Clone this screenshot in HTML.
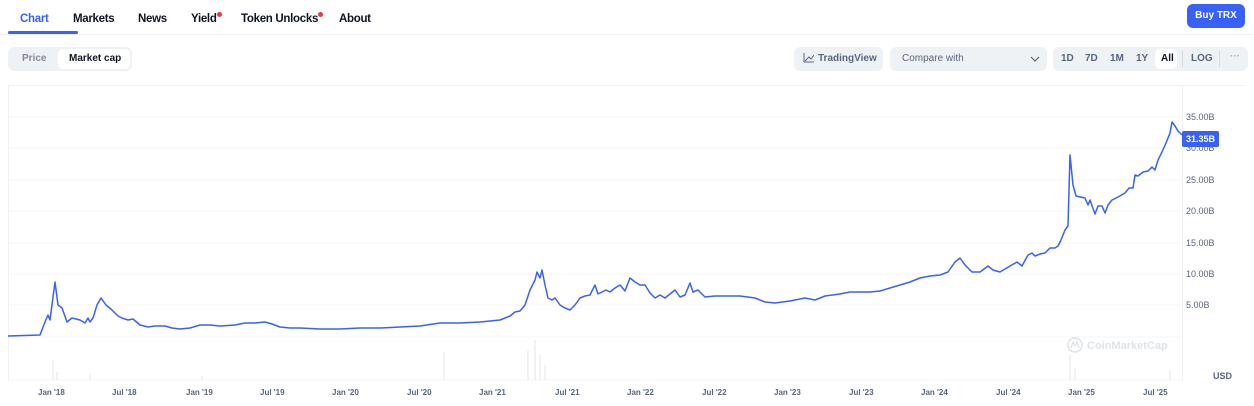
<!DOCTYPE html>
<html><head><meta charset="utf-8"><style>
*{margin:0;padding:0;box-sizing:border-box}
body{width:1254px;height:406px;background:#fff;font-family:"Liberation Sans",sans-serif;position:relative;overflow:hidden;color:#0d1421}
.a{position:absolute;white-space:nowrap}
.tab{font-size:11.5px;font-weight:600;top:13px;letter-spacing:-0.3px}
.dot{display:inline-block;width:5px;height:5px;border-radius:50%;background:#ea3943;vertical-align:top;margin-top:-1px}
.pill{position:absolute;background:#eff2f5;border-radius:6px;top:47px;height:24px}
.s{font-size:10px;font-weight:600;color:#58667e}
.yl{font-size:9px;color:#58667e;left:1186px}
.xl{font-size:8px;color:#58667e;top:388px;font-weight:600}
</style></head><body>
<div class="a tab" style="left:20px;color:#3861fb">Chart</div>
<div style="position:absolute;left:8px;top:31px;width:70px;height:3px;background:#3861fb;border-radius:2px"></div>
<div class="a tab" style="left:73px">Markets</div>
<div class="a tab" style="left:138px">News</div>
<div class="a tab" style="left:191px">Yield<span class="dot"></span></div>
<div class="a tab" style="left:241px">Token Unlocks<span class="dot"></span></div>
<div class="a tab" style="left:339px">About</div>
<div style="position:absolute;left:0;top:34px;width:1254px;height:1px;background:#eff2f5"></div>
<div style="position:absolute;left:1187px;top:4px;width:58px;height:24px;background:#3861fb;border-radius:6px;color:#fff;font-size:10px;font-weight:700;text-align:center;line-height:24px">Buy TRX</div>

<div class="pill" style="left:8px;width:124px"></div>
<div class="a s" style="left:22px;top:53px;color:#808a9d">Price</div>
<div style="position:absolute;left:58px;top:49px;width:72px;height:20px;background:#fff;border-radius:5px"></div>
<div class="a s" style="left:69px;top:53px;color:#0d1421">Market cap</div>

<div class="pill" style="left:794px;width:89px"></div>
<svg class="a" style="left:803px;top:53px" width="11" height="10" viewBox="0 0 11 10"><path d="M1 0V9H11M2 8L6 4L8 6L11 2" fill="none" stroke="#58667e" stroke-width="1"/></svg>
<div class="a s" style="left:818px;top:53px">TradingView</div>
<div class="pill" style="left:890px;width:157px"></div>
<div class="a s" style="left:902px;top:53px;font-weight:500">Compare with</div>
<svg class="a" style="left:1030px;top:56px" width="10" height="6"><path d="M1 1L5 5L9 1" fill="none" stroke="#58667e" stroke-width="1.2"/></svg>
<div class="pill" style="left:1053px;width:195px"></div>
<div style="position:absolute;left:1155px;top:49px;width:22px;height:20px;background:#fff;border-radius:5px"></div>
<div class="a s" style="left:1061px;top:53px">1D</div>
<div class="a s" style="left:1085px;top:53px">7D</div>
<div class="a s" style="left:1110px;top:53px">1M</div>
<div class="a s" style="left:1136px;top:53px">1Y</div>
<div class="a s" style="left:1161px;top:53px;color:#0d1421">All</div>
<div style="position:absolute;left:1182px;top:51px;width:1px;height:16px;background:#d5dae1"></div>
<div class="a s" style="left:1191px;top:53px">LOG</div>
<div style="position:absolute;left:1219px;top:51px;width:1px;height:16px;background:#d5dae1"></div>
<div class="a s" style="left:1230px;top:51px;color:#a6b0c3">···</div>

<div style="position:absolute;left:8px;top:85px;width:1238px;height:1px;background:#eff2f5"></div>
<div style="position:absolute;left:8px;top:85px;width:1px;height:296px;background:#eff2f5"></div>
<div style="position:absolute;left:1182px;top:85px;width:1px;height:296px;background:#eff2f5"></div>
<svg class="a" style="left:0;top:0" width="1254" height="406">
<g stroke="#f3f4f6" stroke-width="1">
<line x1="9" y1="117" x2="1182" y2="117"/><line x1="9" y1="148" x2="1182" y2="148"/><line x1="9" y1="180" x2="1182" y2="180"/><line x1="9" y1="211" x2="1182" y2="211"/><line x1="9" y1="243" x2="1182" y2="243"/><line x1="9" y1="274" x2="1182" y2="274"/><line x1="9" y1="305" x2="1182" y2="305"/><line x1="9" y1="337" x2="1182" y2="337"/><line x1="9" y1="380" x2="1182" y2="380"/>
</g>
<g stroke="#e3e6ea" stroke-width="1">
<line x1="53" y1="380" x2="53" y2="360"/><line x1="57" y1="380" x2="57" y2="372"/><line x1="90" y1="380" x2="90" y2="374"/><line x1="202" y1="380" x2="202" y2="376"/><line x1="444" y1="380" x2="444" y2="352"/><line x1="528" y1="380" x2="528" y2="350"/><line x1="535" y1="380" x2="535" y2="340"/><line x1="540" y1="380" x2="540" y2="355"/><line x1="545" y1="380" x2="545" y2="365"/><line x1="1070" y1="380" x2="1070" y2="355"/><line x1="1075" y1="380" x2="1075" y2="368"/><line x1="1170" y1="380" x2="1170" y2="370"/>
</g>
<polyline fill="none" stroke="#3861fb" stroke-width="1.5" stroke-linejoin="round" points="8,336 40,335 45,322 48,315 50,320 55,282 58,305 62,308 67,322 72,318 80,320 85,323 88,318 90,322 93,318 97,305 101,298 106,305 112,310 118,316 122,318 128,320 133,319 140,325 148,327 155,326 165,326 172,328 180,329 190,328 200,325 210,325 220,326 235,325 245,323 255,323 265,322 272,324 280,327 290,328 300,328 320,329 340,329 360,328 380,328 400,327 420,326 440,323 460,323 480,322 500,320 510,316 515,312 520,311 525,305 530,290 535,280 537,272 540,278 542,270 545,285 548,298 552,300 555,298 560,305 565,308 570,310 575,305 580,298 585,296 590,295 595,285 598,294 602,292 606,290 610,292 615,288 620,285 625,291 630,278 635,282 640,285 645,285 650,293 655,298 660,295 665,298 670,294 675,290 680,297 685,295 690,283 693,292 698,290 705,297 715,296 725,296 740,296 755,298 765,302 775,303 790,301 805,298 815,300 825,296 840,294 850,292 860,292 870,292 880,291 890,288 900,285 910,282 920,278 930,276 940,275 948,272 955,262 960,258 965,265 972,272 980,272 988,266 993,270 1000,272 1010,266 1017,262 1022,266 1028,255 1032,253 1035,256 1040,254 1045,253 1050,248 1055,248 1058,246 1061,240 1065,230 1068,226 1070,155 1073,185 1076,196 1085,198 1088,205 1090,200 1095,214 1098,206 1102,206 1105,213 1108,205 1112,200 1118,197 1125,193 1129,188 1133,188 1135,175 1138,176 1143,172 1148,171 1152,167 1155,170 1158,160 1162,152 1166,143 1170,133 1172,122 1175,126 1178,131 1182,135"/>
<circle cx="1075" cy="345" r="7" fill="none" stroke="#dfe3e8" stroke-width="1.5"/>
<path d="M1071 348L1073 342L1075 346L1077 342L1079 348" fill="none" stroke="#dfe3e8" stroke-width="1.3"/>
<text x="1087" y="349" font-size="11" font-family="Liberation Sans" font-weight="600" fill="#dfe3e8">CoinMarketCap</text>
</svg>
<div class="a yl" style="top:112px">35.00B</div>
<div class="a yl" style="top:143px">30.00B</div>
<div class="a yl" style="top:175px">25.00B</div>
<div class="a yl" style="top:206px">20.00B</div>
<div class="a yl" style="top:238px">15.00B</div>
<div class="a yl" style="top:269px">10.00B</div>
<div class="a yl" style="top:300px">5.00B</div>
<div style="position:absolute;left:1182px;top:131px;width:37px;height:16px;background:#3861fb;border-radius:2px;color:#fff;font-size:9px;font-weight:700;line-height:16px;text-align:center">31.35B</div>
<div class="a" style="left:1213px;top:371px;font-size:9px;font-weight:700;color:#58667e">USD</div>
<div class="a xl" style="left:38px">Jan '18</div>
<div class="a xl" style="left:112px">Jul '18</div>
<div class="a xl" style="left:186px">Jan '19</div>
<div class="a xl" style="left:260px">Jul '19</div>
<div class="a xl" style="left:332px">Jan '20</div>
<div class="a xl" style="left:407px">Jul '20</div>
<div class="a xl" style="left:479px">Jan '21</div>
<div class="a xl" style="left:555px">Jul '21</div>
<div class="a xl" style="left:627px">Jan '22</div>
<div class="a xl" style="left:702px">Jul '22</div>
<div class="a xl" style="left:774px">Jan '23</div>
<div class="a xl" style="left:849px">Jul '23</div>
<div class="a xl" style="left:921px">Jan '24</div>
<div class="a xl" style="left:996px">Jul '24</div>
<div class="a xl" style="left:1068px">Jan '25</div>
<div class="a xl" style="left:1143px">Jul '25</div>
</body></html>
